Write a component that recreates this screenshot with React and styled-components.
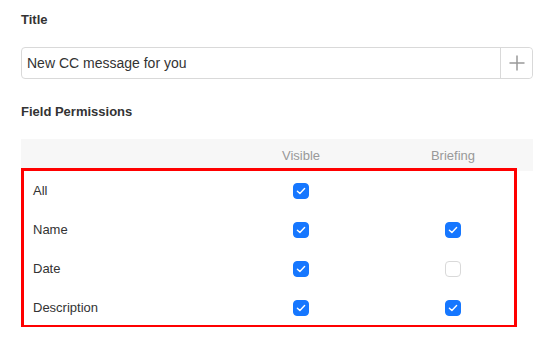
import React from 'react';
import styled, { createGlobalStyle } from 'styled-components';

const GlobalStyle = createGlobalStyle`
  body {
    margin: 0;
    background: #fff;
    font-family: Arial, "Liberation Sans", sans-serif;
    color: #333;
  }
`;

const Page = styled.div`
  box-sizing: border-box;
  width: 553px;
  padding: 10px 20px 0 21px;
`;

const Label = styled.div`
  font-size: 13px;
  font-weight: 700;
  line-height: 20px;
  color: #333;
  margin-top: ${(p) => p.$top || 0}px;
  margin-bottom: 17px;
`;

const InputGroup = styled.div`
  display: flex;
  width: 512px;
  height: 32px;
  box-sizing: border-box;
  border: 1px solid #d9d9d9;
  border-radius: 4px;
`;

const TextInput = styled.input`
  flex: 1;
  min-width: 0;
  border: none;
  outline: none;
  padding: 0 5px;
  font-family: Arial, "Liberation Sans", sans-serif;
  font-size: 14px;
  color: #333;
  background: transparent;
  border-radius: 4px 0 0 4px;
`;

const AddButton = styled.button`
  width: 32px;
  border: none;
  border-left: 1px solid #d9d9d9;
  background: #fff;
  padding: 0;
  display: flex;
  align-items: center;
  justify-content: center;
  border-radius: 0 4px 4px 0;
  cursor: pointer;
`;

const Table = styled.div`
  width: 512px;
`;

const Row = styled.div`
  display: grid;
  grid-template-columns: 208px 144px 160px;
  align-items: center;
  height: ${(p) => (p.$head ? 32 : 39)}px;
  background: ${(p) => (p.$head ? '#f7f7f7' : '#fff')};
  font-size: 13px;
  color: ${(p) => (p.$head ? '#999' : '#333')};
`;

const Cell = styled.div`
  display: flex;
  justify-content: ${(p) => (p.$center ? 'center' : 'flex-start')};
  padding-left: ${(p) => (p.$center ? 0 : 12)}px;
`;

const Body = styled.div`
  position: relative;
  &::after {
    content: '';
    position: absolute;
    top: -3px;
    left: 0;
    right: 16px;
    bottom: -1px;
    border: 3px solid #ff0000;
    pointer-events: none;
  }
`;

const Box = styled.span`
  display: inline-flex;
  align-items: center;
  justify-content: center;
  width: 16px;
  height: 16px;
  box-sizing: border-box;
  border-radius: 4px;
  background: ${(p) => (p.$checked ? '#1677ff' : '#fff')};
  border: 1px solid ${(p) => (p.$checked ? '#1677ff' : '#d9d9d9')};
`;

const Checkbox = ({ checked }) => (
  <Box $checked={checked}>
    {checked && (
      <svg width="14" height="14" viewBox="0 0 14 14">
        <path d="M3.4 7.2 L5.9 9.6 L10.6 4.6" fill="none" stroke="#fff" strokeWidth="1.4" strokeLinecap="round" strokeLinejoin="round" />
      </svg>
    )}
  </Box>
);

const PlusIcon = () => (
  <svg width="16" height="16" viewBox="0 0 16 16">
    <path d="M8 0.5 V15.5 M0.5 8 H15.5" stroke="#999" strokeWidth="1.5" />
  </svg>
);

const fields = [
  { name: 'All', visible: true, briefing: null },
  { name: 'Name', visible: true, briefing: true },
  { name: 'Date', visible: true, briefing: false },
  { name: 'Description', visible: true, briefing: true },
];

const App = () => (
  <Page>
    <GlobalStyle />
    <Label>Title</Label>
    <InputGroup>
      <TextInput defaultValue="New CC message for you" />
      <AddButton>
        <PlusIcon />
      </AddButton>
    </InputGroup>
    <Label $top={23}>Field Permissions</Label>
    <Table>
      <Row $head>
        <Cell />
        <Cell $center>Visible</Cell>
        <Cell $center>Briefing</Cell>
      </Row>
      <Body>
        {fields.map((f) => (
          <Row key={f.name}>
            <Cell>{f.name}</Cell>
            <Cell $center>
              <Checkbox checked={f.visible} />
            </Cell>
            <Cell $center>
              {f.briefing !== null && <Checkbox checked={f.briefing} />}
            </Cell>
          </Row>
        ))}
      </Body>
    </Table>
  </Page>
);

export default App;
